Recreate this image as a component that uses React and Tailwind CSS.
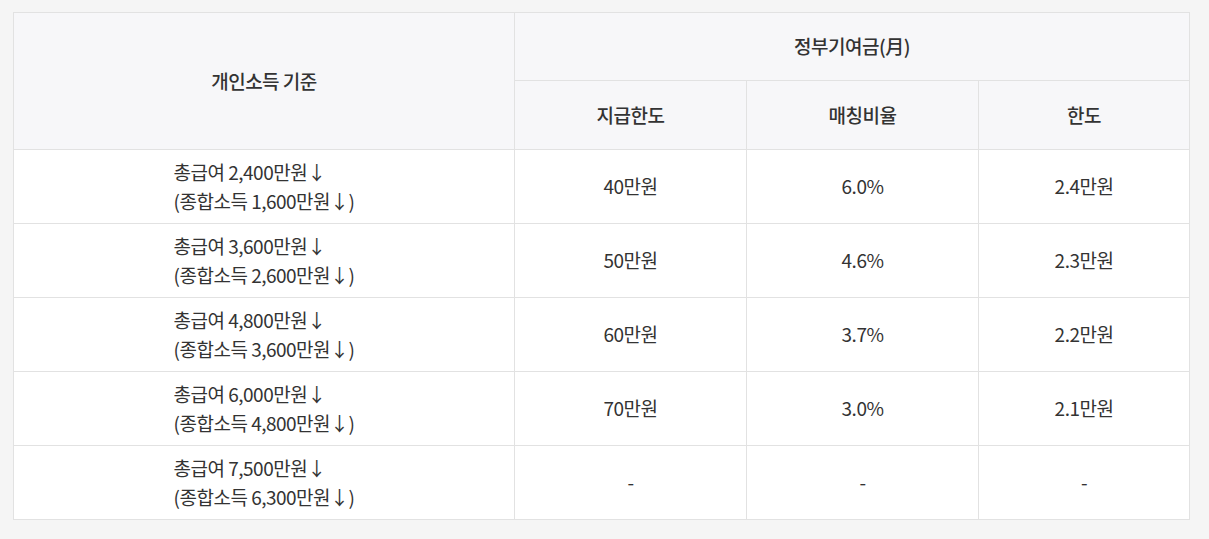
const rows = [
    { total: '2,400', comp: '1,600', limit: '40만원', rate: '6.0%', max: '2.4만원' },
    { total: '3,600', comp: '2,600', limit: '50만원', rate: '4.6%', max: '2.3만원' },
    { total: '4,800', comp: '3,600', limit: '60만원', rate: '3.7%', max: '2.2만원' },
    { total: '6,000', comp: '4,800', limit: '70만원', rate: '3.0%', max: '2.1만원' },
    { total: '7,500', comp: '6,300', limit: '-', rate: '-', max: '-' },
];

export default function App() {
    return (
        <div
            className="w-[1209px] h-[539px] bg-[#f5f5f5] pt-[12px] pl-[13px] text-[#333]"
            style={{ fontFamily: '"Noto Sans CJK KR", "Noto Sans", sans-serif' }}
        >
            <table className="w-[1176px] border-collapse table-fixed text-[19px] tracking-[-0.5px] bg-white">
                <colgroup>
                    <col className="w-[501px]" />
                    <col className="w-[232px]" />
                    <col className="w-[232px]" />
                    <col className="w-[211px]" />
                </colgroup>
                <thead>
                    <tr className="h-[68px] bg-[#f7f7f9]">
                        <th rowSpan={2} className="border border-[#e2e2e2] font-medium text-[#333]">개인소득 기준</th>
                        <th colSpan={3} className="border border-[#e2e2e2] font-medium text-[#333]">정부기여금(月)</th>
                    </tr>
                    <tr className="h-[69px] bg-[#f7f7f9]">
                        <th className="border border-[#e2e2e2] font-medium text-[#333]">지급한도</th>
                        <th className="border border-[#e2e2e2] font-medium text-[#333]">매칭비율</th>
                        <th className="border border-[#e2e2e2] font-medium text-[#333]">한도</th>
                    </tr>
                </thead>
                <tbody>
                    {rows.map((r) => (
                        <tr key={r.total} className="h-[74px]">
                            <td className="border border-[#e2e2e2] text-center">
                                <div className="inline-block text-left leading-[29px]">
                                    총급여 {r.total}만원↓<br />
                                    (종합소득 {r.comp}만원↓)
                                </div>
                            </td>
                            <td className="border border-[#e2e2e2] text-center">{r.limit}</td>
                            <td className="border border-[#e2e2e2] text-center">{r.rate}</td>
                            <td className="border border-[#e2e2e2] text-center">{r.max}</td>
                        </tr>
                    ))}
                </tbody>
            </table>
        </div>
    );
}
